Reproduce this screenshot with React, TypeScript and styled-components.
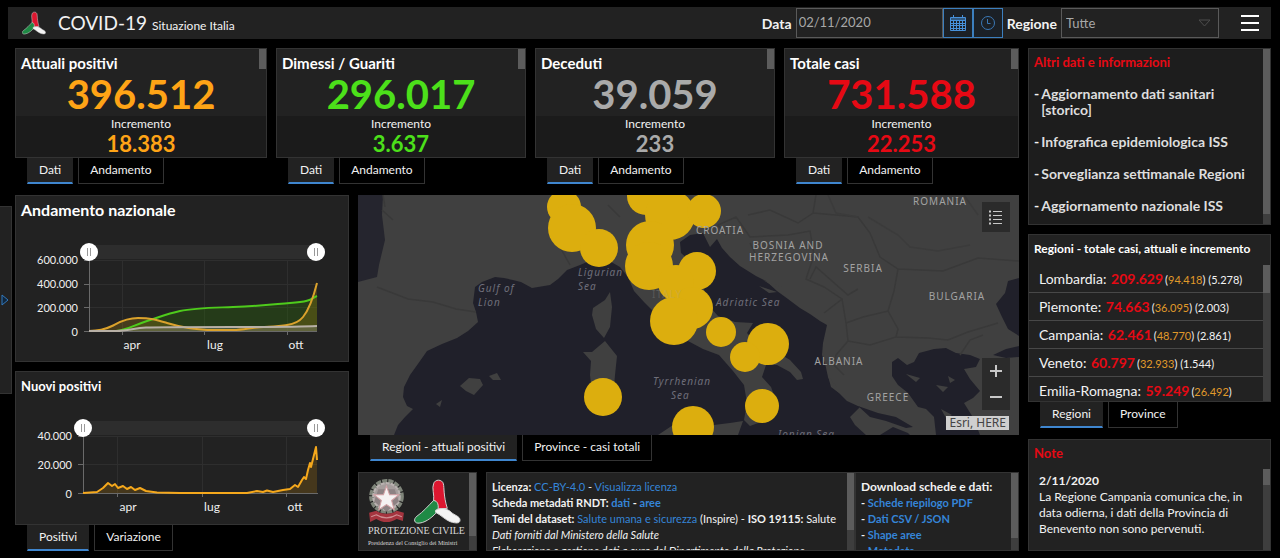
import React, { useState } from "react";
import styled, { createGlobalStyle, css } from "styled-components";

const Global = createGlobalStyle`
  * { box-sizing: border-box; }
  body {
    margin: 0;
    background: #000;
    color: #f2f2f2;
    font-family: Lato, "Liberation Sans", sans-serif;
    font-size: 13px;
  }
  button, input, select { font: inherit; color: inherit; }
  a { color: #3585d8; text-decoration: none; }
`;

const orange = "#ffa416";
const green = "#4ce01a";
const grey = "#aaaaaa";
const red = "#e60914";

/* ---------- page frame ---------- */

const Page = styled.div`
  display: flex;
  flex-direction: column;
  height: 100vh;
  min-height: 540px;
  padding: 7px 9px 7px 0;
  overflow: hidden;
`;

const Header = styled.header`
  display: flex;
  align-items: center;
  height: 32px;
  margin-left: 8px;
  padding: 0 12px 0 14px;
  background: #222;
  flex: none;
`;

const AppTitle = styled.h1`
  margin: 0 5px 0 12px;
  font-size: 19px;
  line-height: 24px;
  font-weight: 400;
`;

const AppSubtitle = styled.span`
  flex: 1;
  padding-top: 4px;
  font-size: 12px;
`;

const FieldLabel = styled.label`
  margin: 0 4px;
  font-size: 14px;
  font-weight: 700;
`;

const DateField = styled.input`
  width: 147px;
  height: 30px;
  padding: 0 2px 2px;
  border: 1px solid #5a5a5a;
  background: #222;
  color: #a8a8a8;
  font-size: 13px;
`;

const DateButton = styled.button`
  display: grid;
  place-items: center;
  width: 30px;
  height: 30px;
  padding: 0;
  border: 1px solid #3c7fbe;
  background: #1b2026;
`;

const SelectWrap = styled.div`
  display: grid;
  align-items: center;
  width: 158px;
  margin-right: 22px;
  > * { grid-area: 1 / 1; }
  > svg { justify-self: end; margin-right: 8px; pointer-events: none; }
`;

const Select = styled.select`
  width: 100%;
  height: 30px;
  padding: 0 4px;
  border: 1px solid #5a5a5a;
  border-radius: 0;
  appearance: none;
  background: #222;
  color: #a8a8a8;
  font-size: 13px;
`;

const MenuButton = styled.button`
  display: flex;
  flex-direction: column;
  gap: 5px;
  width: 18px;
  padding: 0;
  border: 0;
  background: none;
  > span { height: 2px; background: #fff; }
`;

const Body = styled.div`
  display: flex;
  flex: 1;
  min-height: 0;
  margin-top: 9px;
`;

const Drawer = styled.button`
  align-self: center;
  display: grid;
  align-items: center;
  justify-items: start;
  width: 12px;
  height: 188px;
  margin-right: 3px;
  padding: 0 0 0 1px;
  border: 1px solid #333;
  border-left: 0;
  background: #222;
  flex: none;
`;

const MainArea = styled.main`
  display: flex;
  flex-direction: column;
  gap: 11px;
  flex: 1004;
  min-width: 0;
`;

const Aside = styled.aside`
  display: flex;
  flex-direction: column;
  flex: 243;
  min-width: 0;
  margin-left: 9px;
`;

const Column = styled.div<{ $grow: number }>`
  display: flex;
  flex-direction: column;
  flex: ${(p) => p.$grow} 1 0;
  min-width: 0;
  min-height: 0;
`;

const Lower = styled.div`
  display: flex;
  flex: 1;
  min-height: 0;
  gap: 9px;
`;

const Gap = styled.div`
  height: 9px;
  flex: none;
`;

/* ---------- panels, scrollbars and tabs ---------- */

const Panel = styled.section<{ $grow?: number; $dark?: boolean }>`
  position: relative;
  display: flex;
  flex-direction: column;
  min-width: 0;
  min-height: 0;
  overflow: hidden;
  border: 1px solid #333;
  background: ${(p) => (p.$dark ? "#1d1d1d" : "#222")};
  ${(p) => p.$grow && css`flex: ${p.$grow} 1 0;`}
`;

const Scrollbar = styled.div<{ $thumb: string; $top?: number; $bare?: boolean }>`
  position: absolute;
  top: ${(p) => p.$top ?? 0}px;
  right: 0;
  bottom: 0;
  width: 7px;
  background: ${(p) => (p.$bare ? "none" : "#3e3e3e")};
  &::before {
    content: "";
    display: block;
    height: ${(p) => p.$thumb};
    background: #5c5c5c;
  }
`;

const PanelTitle = styled.h2<{ $size?: number }>`
  margin: 5px 5px 0;
  font-size: ${(p) => p.$size ?? 15}px;
  line-height: 18px;
  font-weight: 700;
  color: #fff;
  white-space: nowrap;
`;

const TabBar = styled.div`
  display: flex;
  gap: 5px;
  height: 26px;
  margin-left: 12px;
  flex: none;
`;

const Tab = styled.button<{ $active: boolean }>`
  padding: 0 11px 2px;
  border: 1px solid ${(p) => (p.$active ? "#222" : "#333")};
  border-top: 0;
  background: ${(p) => (p.$active ? "#222" : "#000")};
  font-size: 12px;
  white-space: nowrap;
  ${(p) => p.$active && css`border-bottom: 2px solid #3f86cf; padding-bottom: 1px;`}
`;

function Tabs({ items }: { items: string[] }) {
  const [active, setActive] = useState(0);
  return (
    <TabBar role="tablist">
      {items.map((t, i) => (
        <Tab key={t} role="tab" aria-selected={i === active} $active={i === active} onClick={() => setActive(i)}>
          {t}
        </Tab>
      ))}
    </TabBar>
  );
}

/* ---------- indicator cards ---------- */

const Cards = styled.div`
  display: grid;
  grid-template-columns: 252fr 250fr 240fr 235fr;
  gap: 9px;
  flex: none;
`;

const BigNumber = styled.div<{ $color: string }>`
  height: 44px;
  color: ${(p) => p.$color};
  font-size: 40px;
  line-height: 44px;
  font-weight: 700;
  text-align: center;
`;

const Increment = styled.div`
  height: 41px;
  background: #1b1b1b;
  font-size: 12px;
  line-height: 16px;
  text-align: center;
`;

const IncrementValue = styled.div<{ $color: string }>`
  color: ${(p) => p.$color};
  font-size: 22px;
  line-height: 24px;
  font-weight: 700;
`;

const indicators = [
  { title: "Attuali positivi", value: "396.512", inc: "18.383", color: orange },
  { title: "Dimessi / Guariti", value: "296.017", inc: "3.637", color: green },
  { title: "Deceduti", value: "39.059", inc: "233", color: grey },
  { title: "Totale casi", value: "731.588", inc: "22.253", color: red },
];

/* ---------- charts ---------- */

/* The slider shares the chart's cell, so it rides on the top edge of the plot. */
const ChartStack = styled.div`
  display: grid;
  margin-top: auto;
  align-items: start;
  > * { grid-area: 1 / 1; }
  > svg { width: 100%; height: auto; display: block; font-size: 12px; fill: #f0f0f0; }
`;

const RangeTrack = styled.div<{ $start: number }>`
  display: grid;
  align-items: center;
  height: 18px;
  margin: 0 23px 0 ${(p) => p.$start}px;
  background: linear-gradient(#2d2d2d, #2d2d2d) center / calc(100% - 18px) 14px no-repeat;
  > * { grid-area: 1 / 1; }
`;

const RangeInput = styled.input`
  width: 100%;
  height: 18px;
  margin: 0;
  appearance: none;
  background: none;
  pointer-events: none;
  &::-webkit-slider-thumb {
    appearance: none;
    width: 18px;
    height: 18px;
    border-radius: 50%;
    pointer-events: auto;
    background:
      linear-gradient(90deg, #999 1px, transparent 1px 3px, #999 3px) center / 4px 8px no-repeat,
      #fff;
  }
`;

function RangeSlider({ start, name }: { start: number; name: string }) {
  return (
    <RangeTrack $start={start}>
      <RangeInput type="range" min={0} max={100} defaultValue={0} aria-label={`${name}: inizio`} />
      <RangeInput type="range" min={0} max={100} defaultValue={100} aria-label={`${name}: fine`} />
    </RangeTrack>
  );
}

function NationalChart() {
  const healed = "M73 88L100 88C112 87 118 82 131 78S150 71 164 68S190 65 217 64S251 62 274 60S294 56 301 53";
  const active = "M73 88C84 88 90 86 96 83S109 75 122 75S141 77 151 80S175 86 191 87H217C229 87 236 84 248 84S264 83 271 82S283 79 287 74S296 60 301 40";
  const dead = "M73 88H100C112 88 118 85 130 84.500S190 84 217 84S280 84 301 83";
  return (
    <svg viewBox="0 0 332 118" role="img" aria-label="Andamento nazionale">
      <path d="M73 17.500H301M73 41.500H301M73 64.500H301M106.500 17V88M188.500 17V88M271.500 17V88" stroke="#2e2e2e" />
      <path d="M68 17.500H73M68 41.500H73M68 64.500H73M68 88.500H301M73.500 17V88M106.500 88V92M188.500 88V92M271.500 88V92" stroke="#6a6a6a" fill="none" />
      <path d={healed + "V88H73Z"} fill="#2c6a08" fillOpacity=".35" />
      <path d={active + "V88H73Z"} fill="#a07a10" fillOpacity=".3" />
      <path d={dead + "V88H73Z"} fill="#999" fillOpacity=".3" />
      <path d={healed} stroke="#4ecb1c" strokeWidth="2" fill="none" />
      <path d={active} stroke="#dba22c" strokeWidth="2" fill="none" />
      <path d={dead} stroke="#b8b0a6" strokeWidth="2" fill="none" />
      <g textAnchor="end" fontSize="11">
        <text x="62" y="21">600.000</text>
        <text x="62" y="45">400.000</text>
        <text x="62" y="69">200.000</text>
        <text x="62" y="93">0</text>
      </g>
      <g textAnchor="middle">
        <text x="116" y="106">apr</text>
        <text x="199" y="106">lug</text>
        <text x="280" y="106">ott</text>
      </g>
    </svg>
  );
}

function NewCasesChart() {
  const line =
    "M67 73L81 72L87 68L92 63L96 66L99 64L102 68L107 66L111 69L115 67L119 70L124 68L130 71L141 72.500L164 73H231L241 71L247 72L251 70.500L257 72L267 70L274 69L279 65L282 67L286 60L288 57L290 59L292 50L294 43L295 47L298 35L300 27L301 40";
  return (
    <svg viewBox="0 -1 332 105" role="img" aria-label="Nuovi positivi">
      <path d="M67 16.500H301M67 44.500H301M101.500 16V73M186.500 16V73M270.500 16V73" stroke="#2e2e2e" />
      <path d="M62 16.500H67M62 44.500H67M62 73.500H302M67.500 16V73M101.500 73V77M186.500 73V77M270.500 73V77" stroke="#6a6a6a" fill="none" />
      <path d={line + "V73H67Z"} fill="#a07010" fillOpacity=".28" />
      <path d={line} stroke="#f5a81c" strokeWidth="2" strokeLinejoin="round" fill="none" />
      <g textAnchor="end" fontSize="11">
        <text x="56" y="20">40.000</text>
        <text x="56" y="49">20.000</text>
        <text x="56" y="78">0</text>
      </g>
      <g textAnchor="middle">
        <text x="112" y="91">apr</text>
        <text x="196" y="91">lug</text>
        <text x="279" y="91">ott</text>
      </g>
    </svg>
  );
}

/* ---------- map ---------- */

const MapPanel = styled.section`
  position: relative;
  flex: 1;
  min-height: 0;
  overflow: hidden;
  background: #20202a;
  > svg { width: 100%; height: 100%; display: block; }
`;

const Places = styled.g`
  font-family: "Noto Sans", sans-serif;
  font-size: 10px;
  letter-spacing: 1px;
  fill: #a3a3a3;
  text-anchor: middle;
`;

const Seas = styled(Places)`
  font-style: italic;
  fill: #6f6f7a;
  text-anchor: start;
`;

const MapButton = styled.button<{ $tall?: boolean }>`
  display: grid;
  place-items: center;
  width: 28px;
  height: ${(p) => (p.$tall ? 30 : 26)}px;
  padding: 0;
  border: 0;
  background: #2b2b2b;
`;

const LegendSlot = styled.div`
  position: absolute;
  top: 7px;
  right: 9px;
`;

const ZoomSlot = styled.div`
  position: absolute;
  right: 9px;
  bottom: 25px;
`;

const Attribution = styled.div`
  position: absolute;
  right: 10px;
  bottom: 5px;
  padding: 0 3px;
  background: #cfcfcf;
  color: #444;
  font-family: "Noto Sans", sans-serif;
  font-size: 12px;
  line-height: 14px;
`;

const bubbles: [number, number, number][] = [
  [206, 12, 17], [214, 33, 24], [241, 53, 19], [288, 1, 19], [312, 20, 25], [346, 16, 17],
  [292, 50, 24], [291, 71, 24], [339, 76, 19], [318, 88, 18], [334, 113, 21], [316, 126, 24],
  [363, 137, 15], [410, 149, 21], [387, 162, 15], [404, 211, 17], [335, 232, 21], [245, 202, 19],
];

function MapDrawing() {
  return (
    <svg viewBox="0 0 661 240" preserveAspectRatio="xMidYMid slice" role="img" aria-label="Mappa delle regioni">
      <g fill="#404040">
        <path d="M0 0H661V240H508L497 230L492 222L502 212L489 206L482 199L475 192L470 182L467 168L464 160L465 148L469 130L462 126L452 119L442 113L430 104L419 96L408 86L398 81L382 71L372 62L364 53L359 44L352 52L345 38L332 40L322 47L323 58L332 66L345 92L352 112L360 121L377 127L395 128L389 138L398 148L417 156L432 165L443 177L445 184L439 185L432 177L419 170L408 170L404 182L413 192L416 200L408 214L400 228L392 231L386 225L389 208L386 190L375 176L361 160L345 154L330 146L312 138L294 115L286 107L276 96L270 82L262 72L248 64L236 64L222 70L209 75L200 84L192 90L174 93L163 87L155 85L146 83L137 82L124 87L117 92L115 108L118 117L120 127L110 136L99 143L84 149L69 156L62 166L52 180L46 192L45 202L49 211L55 214L47 222L40 230L36 240H0Z" />
        <path d="M252 97L254 112L252 132L246 143L238 134L234 120L235 113L247 105Z" />
        <path d="M247 146L259 161L257 180L255 203L246 214L235 205L232 180L233 166L225 157L234 157Z" />
        <path d="M102 191L111 183L122 184L125 190L116 200L108 196ZM131 181L139 178L143 185L135 185ZM78 209L84 205L82 212Z" />
        <path d="M300 240L315 230L340 232L372 228L385 226L380 240Z" />
        <path d="M405 85L424 92L415 91ZM401 91L419 97L411 98ZM470 181L478 191L481 198L473 192Z" />
      </g>
      <path d="M0 0H25L24 20L27 45L21 70L19 82L0 87Z" fill="#25252e" />
      <g fill="#20202a">
        <path d="M534 167L540 163L549 170L556 167L561 158L576 154L588 153L598 158L612 160L622 164L618 172L606 174L612 184L622 196L615 203L606 208L616 224L622 240H578L576 222L568 214L560 212L550 198L540 190L534 181Z" />
        <path d="M661 83L650 86L647 98L638 109L644 122L650 134L661 141Z" />
        <path d="M635 160L648 154L661 151V162L648 163Z" />
        <path d="M500 211L520 218L538 222L555 232L548 233L528 226L512 222ZM522 240L535 232L550 238L552 240Z" />
      </g>
      <path d="M548 179L562 183L558 187ZM578 190L590 192L585 197ZM590 181L597 185L592 188ZM583 214L594 220L588 223ZM600 222L610 226L603 230Z" fill="#404040" />
      <g fill="none" stroke="#393939" strokeWidth="1.500">
        <path d="M19 92L50 104L75 107L98 114L118 117M24 15L35 25M25 0L27 12M200 0L196 18L202 52L212 70M250 10L262 22M390 20L412 15L440 28L455 18L458 0M368 40L360 30L378 22L392 42L430 40L452 36L456 60M392 48L398 60M455 18L500 22L512 38L522 62L540 74L585 76L620 63L661 66M456 60L448 84L466 92L484 104L466 118M452 84L458 72L490 100L500 94M484 104L488 128L490 146L478 160M488 128L505 122L530 116L540 134L538 142L512 150L490 146M538 142L570 143L590 145L610 137L640 128M540 74L536 96L530 116M478 160L476 170L486 180M602 160L612 145L625 140" />
        <path d="M510 22L540 40L552 52L580 56L612 50M470 0L478 18L500 22M606 0L620 20" stroke="#3b3b3b" />
      </g>
      <g fill="#dcae0e">
        {bubbles.map(([cx, cy, r]) => (
          <circle key={`${cx}-${cy}`} cx={cx} cy={cy} r={r} />
        ))}
      </g>
      <Places>
        <text x="582" y="10">ROMANIA</text>
        <text x="362" y="39">CROATIA</text>
        <text x="430" y="54">BOSNIA AND</text>
        <text x="431" y="66">HERZEGOVINA</text>
        <text x="505" y="77">SERBIA</text>
        <text x="599" y="105">BULGARIA</text>
        <text x="481" y="170">ALBANIA</text>
        <text x="530" y="206">GREECE</text>
        <text x="309" y="103" opacity=".25">ITALY</text>
      </Places>
      <Seas>
        <text x="120" y="97">Gulf of</text>
        <text x="120" y="111">Lion</text>
        <text x="220" y="81">Ligurian</text>
        <text x="220" y="95">Sea</text>
        <text x="358" y="111">Adriatic Sea</text>
        <text x="295" y="190">Tyrrhenian</text>
        <text x="313" y="204">Sea</text>
        <text x="420" y="243">Ionian Sea</text>
      </Seas>
    </svg>
  );
}

/* ---------- lower information strip ---------- */

const InfoStrip = styled.div`
  display: grid;
  grid-template-columns: minmax(0, 128fr) minmax(0, 369fr) minmax(0, 164fr);
  height: 79px;
  margin-top: 11px;
  flex: none;
`;

const StripPanel = styled(Panel)`
  padding: 6px 12px 0 5px;
  font-size: 11px;
  line-height: 16px;
  white-space: nowrap;
`;

const StripTitle = styled.b`
  font-size: 12px;
`;

const BrandPanel = styled(Panel)`
  margin-right: 9px;
  padding: 4px 8px 0 9px;
  font-family: "Liberation Serif", serif;
`;

const BrandMarks = styled.div`
  display: flex;
  gap: 9px;
  align-items: center;
  height: 48px;
`;

const BrandName = styled.div<{ $size: number }>`
  font-size: ${(p) => p.$size}px;
  line-height: 12px;
  color: #d8d8d8;
  white-space: nowrap;
`;

function TriMark({ size }: { size: number }) {
  return (
    <svg width={size} height={size} viewBox="0 0 48 46" aria-hidden="true">
      <g stroke="#d4d4d4" strokeWidth="1">
        <path d="M20 23C21 16 18 9 20 5C21 0 29 0 30 5C31 9 30 17 34 30L24 31Z" fill="#dd1730" />
        <path d="M20 22C24 22 26 27 24 33C20 38 13 44 6 45C0 46 -1 41 3 38C10 33 14 28 20 22Z" fill="#1f8a45" />
        <path d="M22 32C27 29 34 30 38 34C41 37 47 38 47 42C47 46 42 45 38 44C32 42 28 37 22 34Z" fill="#f4f4f4" />
      </g>
    </svg>
  );
}

function Emblem() {
  return (
    <svg width="37" height="45" viewBox="0 0 36 44" aria-hidden="true">
      <circle cx="18" cy="17" r="15" fill="none" stroke="#7f857a" strokeWidth="4" strokeDasharray="5 1" />
      <circle cx="18" cy="17" r="13" fill="#a59d9c" stroke="#b9b2b0" strokeWidth="2" strokeDasharray="4 1" />
      <path d="M10 10L26 10L30 22L18 32L6 22Z" fill="#8d8283" />
      <path d="M18 7L21 15.500H30L23 21L25.500 30L18 25L10.500 30L13 21L6 15.500H15Z" fill="#f5f2f2" stroke="#d3a0a4" strokeWidth="1" />
      <path d="M1 33L8 31C13 35 23 35 28 31L35 33L34 41L28 39C22 43 14 43 8 39L2 42Z" fill="#a5353f" />
      <path d="M3 37L8 35C14 39 22 39 28 35L33 37" stroke="#cf8f93" fill="none" />
    </svg>
  );
}

/* ---------- right column ---------- */

const RedTitle = styled.h2`
  margin: 4px 5px 0;
  color: ${red};
  font-size: 13px;
  line-height: 18px;
  font-weight: 700;
`;

const LinkList = styled.ul`
  display: flex;
  flex-direction: column;
  gap: 16px;
  margin: 15px 8px 0 5px;
  padding: 0;
  list-style: none;
  font-size: 14px;
  line-height: 16px;
  font-weight: 700;
  white-space: nowrap;
  > li { display: flex; gap: 2px; }
  a { color: #dedede; }
`;

const RegionList = styled.ul`
  position: relative;
  flex: 1;
  min-height: 0;
  margin: 7px 0 0;
  padding: 0;
  overflow: hidden;
  list-style: none;
`;

const RegionRow = styled.li`
  height: 28px;
  margin-right: 7px;
  padding-left: 10px;
  border-bottom: 1px solid #484848;
  font-size: 14px;
  line-height: 28px;
  white-space: nowrap;
  > b { margin: 0 2px 0 1px; color: ${red}; }
  > small { font-size: 11px; }
  > small > i { color: #e09a2a; font-style: normal; }
`;

const regions = [
  ["Lombardia", "209.629", "94.418", "5.278"],
  ["Piemonte", "74.663", "36.095", "2.003"],
  ["Campania", "62.461", "48.770", "2.861"],
  ["Veneto", "60.797", "32.933", "1.544"],
  ["Emilia-Romagna", "59.249", "26.492", ""],
];

const NotePanel = styled(Panel)`
  margin-top: 11px;
`;

const NoteText = styled.p`
  margin: 11px 18px 0 10px;
  font-size: 12px;
  line-height: 16px;
`;

export default function App() {
  const [date, setDate] = useState("02/11/2020");
  return (
    <Page>
      <Global />
      <Header>
        <TriMark size={24} />
        <AppTitle>COVID-19</AppTitle>
        <AppSubtitle>Situazione Italia</AppSubtitle>
        <FieldLabel htmlFor="data">Data</FieldLabel>
        <DateField id="data" type="text" value={date} onChange={(e) => setDate(e.target.value)} />
        <DateButton aria-label="Apri calendario">
          <svg width="16" height="16" viewBox="0 0 16 16" fill="none" stroke="#4791da">
            <path d="M.5 2.500H15.500V15.500H.5ZM.5 5.500H15.500M.5 8.500H15.500M.5 10.500H15.500M.5 13.500H15.500M3.500 5V15M6.500 5V15M9.500 5V15M12.500 5V15M3.500 0V3M12.500 0V3M1 4H15" />
          </svg>
        </DateButton>
        <DateButton aria-label="Scegli ora">
          <svg width="16" height="16" viewBox="0 0 16 16" fill="none" stroke="#3a78b6">
            <circle cx="8" cy="8" r="6.500" />
            <path d="M7.500 4V8.500H10.500" />
          </svg>
        </DateButton>
        <FieldLabel htmlFor="regione">Regione</FieldLabel>
        <SelectWrap>
          <Select id="regione" defaultValue="Tutte">
            <option>Tutte</option>
            {regions.map((r) => (
              <option key={r[0]}>{r[0]}</option>
            ))}
          </Select>
          <svg width="13" height="8" viewBox="0 0 13 8" fill="none" stroke="#4c4c4c">
            <path d="M1 1H12L6.500 7Z" />
          </svg>
        </SelectWrap>
        <MenuButton aria-label="Menu">
          <span />
          <span />
          <span />
        </MenuButton>
      </Header>

      <Body>
        <Drawer aria-label="Apri pannello">
          <svg width="8" height="12" viewBox="0 0 8 12" fill="#10263c" stroke="#3178bd">
            <path d="M1 1V11L7 6Z" />
          </svg>
        </Drawer>

        <MainArea>
          <Cards>
            {indicators.map((c) => (
              <div key={c.title}>
                <Panel>
                  <PanelTitle>{c.title}</PanelTitle>
                  <BigNumber $color={c.color}>{c.value}</BigNumber>
                  <Increment>
                    Incremento
                    <IncrementValue $color={c.color}>{c.inc}</IncrementValue>
                  </Increment>
                  <Scrollbar $thumb="20px" $bare />
                </Panel>
                <Tabs items={["Dati", "Andamento"]} />
              </div>
            ))}
          </Cards>

          <Lower>
            <Column $grow={334}>
              <Panel $grow={167}>
                <PanelTitle $size={16}>Andamento nazionale</PanelTitle>
                <ChartStack>
                  <NationalChart />
                  <RangeSlider start={64} name="Andamento nazionale" />
                </ChartStack>
              </Panel>
              <Gap />
              <Panel $grow={153}>
                <PanelTitle $size={13}>Nuovi positivi</PanelTitle>
                <ChartStack>
                  <NewCasesChart />
                  <RangeSlider start={58} name="Nuovi positivi" />
                </ChartStack>
              </Panel>
              <Tabs items={["Positivi", "Variazione"]} />
            </Column>

            <Column $grow={661}>
              <MapPanel>
                <MapDrawing />
                <LegendSlot>
                  <MapButton $tall aria-label="Legenda">
                    <svg width="16" height="16" viewBox="0 0 16 16" fill="none" stroke="#c8c8c8">
                      <path d="M5 2.500H14M5 6.500H14M5 10.500H14M5 14.500H14" />
                      <path d="M1 2.500H3M1 6.500H3M1 10.500H3M1 14.500H3" strokeWidth="2" />
                    </svg>
                  </MapButton>
                </LegendSlot>
                <ZoomSlot>
                  <MapButton aria-label="Ingrandisci">
                    <svg width="12" height="12" viewBox="0 0 12 12" stroke="#c8c8c8" strokeWidth="2">
                      <path d="M6 0V12M0 6H12" />
                    </svg>
                  </MapButton>
                  <MapButton aria-label="Riduci">
                    <svg width="12" height="12" viewBox="0 0 12 12" stroke="#c8c8c8" strokeWidth="2">
                      <path d="M0 6H12" />
                    </svg>
                  </MapButton>
                </ZoomSlot>
                <Attribution>Esri, HERE</Attribution>
              </MapPanel>
              <Tabs items={["Regioni - attuali positivi", "Province - casi totali"]} />

              <InfoStrip>
                <BrandPanel>
                  <BrandMarks>
                    <Emblem />
                    <TriMark size={47} />
                  </BrandMarks>
                  <BrandName $size={10}>PROTEZIONE CIVILE</BrandName>
                  <BrandName $size={6}>Presidenza del Consiglio dei Ministri</BrandName>
                  <Scrollbar $thumb="82%" />
                </BrandPanel>
                <StripPanel>
                  <div>
                    <b>Licenza:</b> <a href="#licenza">CC-BY-4.0</a> - <a href="#visualizza">Visualizza licenza</a>
                  </div>
                  <div>
                    <b>Scheda metadati RNDT: <a href="#dati">dati</a> - <a href="#aree">aree</a></b>
                  </div>
                  <div>
                    <b>Temi del dataset:</b> <a href="#salute">Salute umana e sicurezza</a> (Inspire) - <b>ISO 19115:</b> Salute
                  </div>
                  <div>
                    <em>Dati forniti dal Ministero della Salute</em>
                  </div>
                  <div>
                    <em>Elaborazione e gestione dati a cura del Dipartimento della Protezione</em>
                  </div>
                  <Scrollbar $thumb="74%" />
                </StripPanel>
                <StripPanel>
                  <StripTitle>Download schede e dati:</StripTitle>
                  <b>- <a href="#pdf">Schede riepilogo PDF</a></b>
                  <b>- <a href="#csv">Dati CSV / JSON</a></b>
                  <b>- <a href="#shape">Shape aree</a></b>
                  <b>- <a href="#metadata">Metadata</a></b>
                  <Scrollbar $thumb="84%" />
                </StripPanel>
              </InfoStrip>
            </Column>
          </Lower>
        </MainArea>

        <Aside>
          <Panel $grow={177} $dark>
            <RedTitle>Altri dati e informazioni</RedTitle>
            <LinkList>
              <li>- <a href="#storico">Aggiornamento dati sanitari<br />[storico]</a></li>
              <li>- <a href="#infografica">Infografica epidemiologica ISS</a></li>
              <li>- <a href="#sorveglianza">Sorveglianza settimanale Regioni</a></li>
              <li>- <a href="#nazionale">Aggiornamento nazionale ISS</a></li>
            </LinkList>
            <Scrollbar $thumb="94%" />
          </Panel>
          <Gap />
          <Panel $grow={168}>
            <PanelTitle $size={12}>Regioni - totale casi, attuali e incremento</PanelTitle>
            <RegionList>
              {regions.map(([name, total, active, inc]) => (
                <RegionRow key={name}>
                  {name}: <b>{total}</b>
                  <small>(<i>{active}</i>){inc && ` (${inc})`}</small>
                </RegionRow>
              ))}
              <Scrollbar $thumb="28px" />
            </RegionList>
          </Panel>
          <Tabs items={["Regioni", "Province"]} />
          <NotePanel $grow={111}>
            <RedTitle>Note</RedTitle>
            <NoteText>
              <b>2/11/2020</b>
              <br />
              La Regione Campania comunica che, in data odierna, i dati della Provincia di Benevento non sono pervenuti.
            </NoteText>
            <Scrollbar $thumb="16px" $top={29} />
          </NotePanel>
        </Aside>
      </Body>
    </Page>
  );
}
